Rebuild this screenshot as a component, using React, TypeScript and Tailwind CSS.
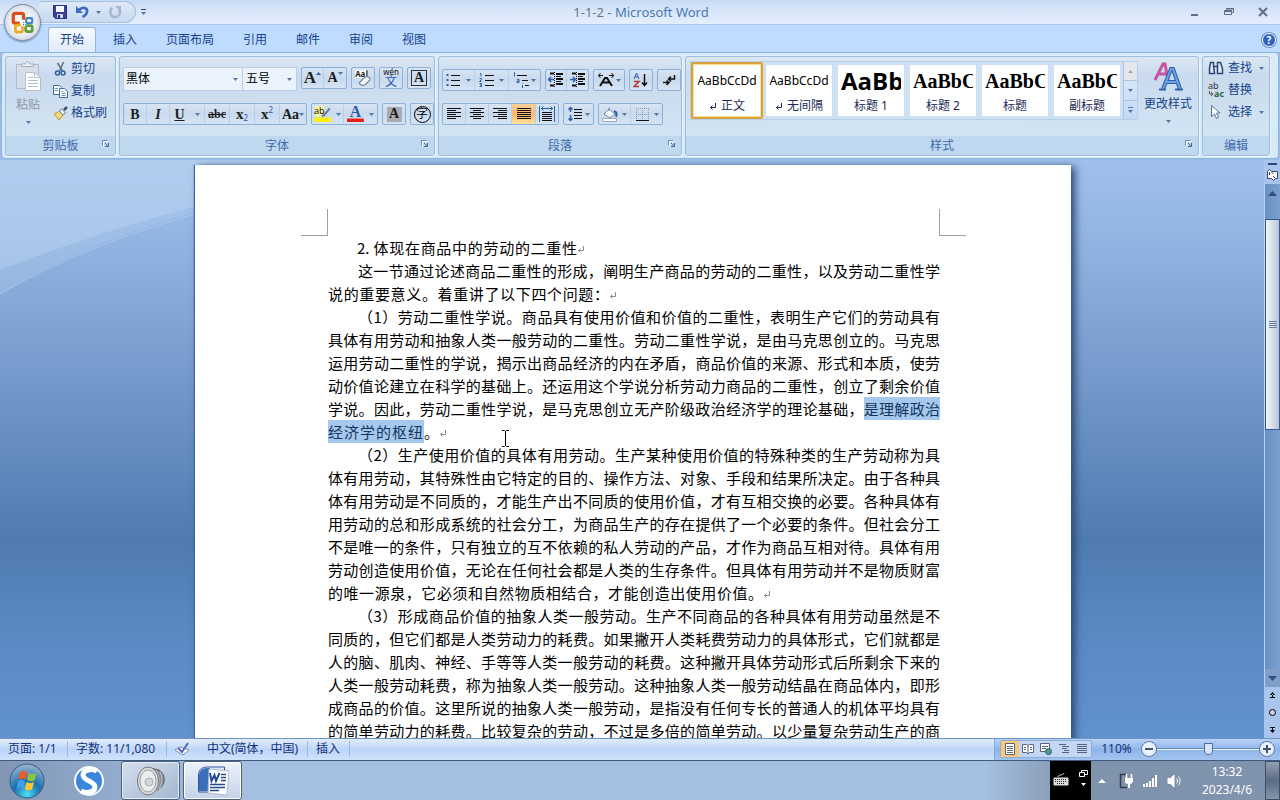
import type { ReactNode } from "react";
import clsx from "clsx";

type lineType = {
  text: string;
  selected?: string;
  tail?: string;
  end?: boolean;
  className?: string;
};

const tabs = ["开始", "插入", "页面布局", "引用", "邮件", "审阅", "视图"];

const paragraphs: lineType[][] = [
  [{ text: "2. 体现在商品中的劳动的二重性", end: true, className: "ml-[29px] w-[220px]" }],
  [
    { text: "这一节通过论述商品二重性的形成，阐明生产商品的劳动的二重性，以及劳动二重性学", className: "ml-[30px]" },
    { text: "说的重要意义。着重讲了以下四个问题：", end: true, className: "w-[281px]" },
  ],
  [
    { text: "（1）劳动二重性学说。商品具有使用价值和价值的二重性，表明生产它们的劳动具有", className: "ml-[30px]" },
    { text: "具体有用劳动和抽象人类一般劳动的二重性。劳动二重性学说，是由马克思创立的。马克思" },
    { text: "运用劳动二重性的学说，揭示出商品经济的内在矛盾，商品价值的来源、形式和本质，使劳" },
    { text: "动价值论建立在科学的基础上。还运用这个学说分析劳动力商品的二重性，创立了剩余价值" },
    { text: "学说。因此，劳动二重性学说，是马克思创立无产阶级政治经济学的理论基础，", selected: "是理解政治" },
    { text: "", selected: "经济学的枢纽", tail: "。", end: true, className: "w-[111px]" },
  ],
  [
    { text: "（2）生产使用价值的具体有用劳动。生产某种使用价值的特殊种类的生产劳动称为具", className: "ml-[30px]" },
    { text: "体有用劳动，其特殊性由它特定的目的、操作方法、对象、手段和结果所决定。由于各种具" },
    { text: "体有用劳动是不同质的，才能生产出不同质的使用价值，才有互相交换的必要。各种具体有" },
    { text: "用劳动的总和形成系统的社会分工，为商品生产的存在提供了一个必要的条件。但社会分工" },
    { text: "不是唯一的条件，只有独立的互不依赖的私人劳动的产品，才作为商品互相对待。具体有用" },
    { text: "劳动创造使用价值，无论在任何社会都是人类的生存条件。但具体有用劳动并不是物质财富" },
    { text: "的唯一源泉，它必须和自然物质相结合，才能创造出使用价值。", end: true, className: "w-[435px]" },
  ],
  [
    { text: "（3）形成商品价值的抽象人类一般劳动。生产不同商品的各种具体有用劳动虽然是不", className: "ml-[30px]" },
    { text: "同质的，但它们都是人类劳动力的耗费。如果撇开人类耗费劳动力的具体形式，它们就都是" },
    { text: "人的脑、肌肉、神经、手等等人类一般劳动的耗费。这种撇开具体劳动形式后所剩余下来的" },
    { text: "人类一般劳动耗费，称为抽象人类一般劳动。这种抽象人类一般劳动结晶在商品体内，即形" },
    { text: "成商品的价值。这里所说的抽象人类一般劳动，是指没有任何专长的普通人的机体平均具有" },
    { text: "的简单劳动力的耗费。比较复杂的劳动，不过是多倍的简单劳动。以少量复杂劳动生产的商" },
  ],
];

const styleItems = [
  { name: "正文", mark: true, preview: "text-[12px]" },
  { name: "无间隔", mark: true, preview: "text-[12px]" },
  { name: "标题 1", preview: "text-[24px] font-bold font-['Open_Sans','Noto_Sans',sans-serif]" },
  { name: "标题 2", preview: "text-[20px] font-bold font-['Liberation_Serif',serif]" },
  { name: "标题", preview: "text-[20px] font-bold font-['Liberation_Serif',serif]" },
  { name: "副标题", preview: "text-[20px] font-bold font-['Liberation_Serif',serif]" },
];

const Arrow = ({ className }: { className?: string }) => (
  <svg viewBox="0 0 5 3" className={clsx("h-[3px] w-[5px] shrink-0 fill-[#5577a8]", className)}>
    <path d="M0 0h5L2.500 3z" />
  </svg>
);

const ReturnMark = ({ className }: { className?: string }) => (
  <svg viewBox="0 0 8 9" className={clsx("h-[9px] w-2 shrink-0", className)} fill="none" stroke="currentColor">
    <path d="M6.500 1v4.500H1.500M3.500 3.500l-2 2 2 2" />
  </svg>
);

const Launcher = ({ label }: { label: string }) => (
  <button aria-label={label} className="absolute right-[5px] top-[3px]">
    <svg viewBox="0 0 9 9" className="size-[9px]" fill="none" stroke="#6a8cb8">
      <path d="M1.500 6.500v-5h5" />
      <path d="M2.500 7.500v-5h5" stroke="#fff" />
      <path d="M4 4l3 3M7.500 4v3.500H4" stroke="#46699b" />
    </svg>
  </button>
);

const Group = ({ title, className, launcher, children }: { title: string; className: string; launcher?: boolean; children: ReactNode }) => (
  <section
    aria-label={title}
    className={clsx(
      "flex h-[100px] flex-col overflow-hidden rounded-[3px] border border-[#9ebcdc] bg-linear-to-b from-[#dbe7f4] via-[#c9daed] via-20% to-[#d6e7f5] shadow-[1px_1px_0_#eaf4fd]",
      className
    )}
  >
    <div className="min-h-0 flex-1">{children}</div>
    <div className="relative h-[19px] bg-[#c0d8ef] text-center leading-[19px] text-[#3e6aaa]">
      {title}
      {launcher && <Launcher label={title + "设置"} />}
    </div>
  </section>
);

const ButtonSet = ({ children }: { children: ReactNode }) => (
  <div className="flex h-[22px] shrink-0 divide-x divide-[#b9cee7] rounded-[2px] border border-[#8fb0d8] bg-linear-to-b from-[#d7e4f3] via-[#c9daee] to-[#d5e4f5]">
    {children}
  </div>
);

const Tool = ({ label, w = "w-[22px]", arrow, active, children }: { label: string; w?: string; arrow?: boolean; active?: boolean; children: ReactNode }) => (
  <button
    aria-label={label}
    className={clsx(
      "flex items-center justify-center gap-1",
      w,
      active && "bg-linear-to-b from-[#fbd09c] via-[#fbb568] to-[#fde29b]"
    )}
  >
    {children}
    {arrow && <Arrow />}
  </button>
);

const Icon = ({ children, className }: { children: ReactNode; className?: string }) => (
  <svg viewBox="0 0 16 16" className={clsx("size-4 shrink-0", className)} fill="none" stroke="#111">
    {children}
  </svg>
);

const serif = "font-['Liberation_Serif',serif] text-[#1c1c1c]";

const TitleBar = () => (
  <header className="relative flex h-6 shrink-0 items-center justify-between bg-linear-to-b from-[#c6dbf5] via-[#d9e6f8] via-50% to-[#e3effd]">
    <div className="ml-10 flex h-[22px] items-center rounded-r-full border border-l-0 border-[#a6c0e0] bg-linear-to-b from-[#dde9f8] to-[#c8daf0] pl-3 pr-3">
      <button aria-label="保存">
        <Icon>
          <path d="M1.500 1.500h13v13H3.500l-2-2z" fill="#3a3f9c" stroke="#2b3185" />
          <path d="M4 2h8v6H4z" fill="#f3f6fd" stroke="none" />
          <path d="M5 10h6v4H5z" fill="#cdd4ea" stroke="none" />
          <path d="M6 11h2v3H6z" fill="#23286b" stroke="none" />
        </Icon>
      </button>
      <button aria-label="撤消" className="ml-1.5 flex items-center gap-1.5">
        <Icon>
          <path d="M5 6c4-4 9-2 8 2-.500 2.500-2.500 4-4.500 5" stroke="#3f68c0" strokeWidth="2.500" />
          <path d="M2 2v7h7z" fill="#3f68c0" stroke="none" />
        </Icon>
        <Arrow />
      </button>
      <button aria-label="重复" className="ml-1.5">
        <Icon>
          <path d="M5 3.500C1.500 8 4 13 8 13s6.500-4 4-8" stroke="#a9b8cf" strokeWidth="2.500" />
          <path d="M8 2h6v6z" fill="#a9b8cf" stroke="none" />
        </Icon>
      </button>
    </div>
    <button aria-label="自定义快速访问工具栏" className="ml-1 flex w-[6px] flex-col items-center gap-0.5">
      <i className="h-px w-[5px] bg-[#2b4f85]" />
      <Arrow className="fill-[#2b4f85]" />
    </button>
    <h1 className="flex-1 pr-[54px] text-center text-[13px] leading-6 text-[#4a79b5]">
      <span className="text-[#6c7580]">1-1-2</span> - Microsoft Word
    </h1>
    <div className="flex gap-6 pr-3">
      <button aria-label="最小化">
        <svg viewBox="0 0 10 10" className="size-2.5" fill="none" stroke="#5d6f88" strokeWidth="2">
          <path d="M1 8h7" />
        </svg>
      </button>
      <button aria-label="还原">
        <svg viewBox="0 0 10 10" className="size-2.5" fill="none" stroke="#5d6f88">
          <path d="M.500 3.500h7v4h-7zM.500 4.500h7M2.500 3V1.500h7v4H8M2.500 2h7" />
        </svg>
      </button>
      <button aria-label="关闭">
        <svg viewBox="0 0 10 10" className="size-2.5" fill="none" stroke="#5d6f88" strokeWidth="2">
          <path d="M1 1l8 8M9 1L1 9" />
        </svg>
      </button>
    </div>
    <button aria-label="Office 按钮" className="absolute left-1 top-1 z-10 flex size-[37px] items-center justify-center rounded-full border border-[#7f8ea5] bg-radial from-white via-[#eceff6] to-[#b3bfd2] shadow-[0_1px_2px_#6d82a3]">
      <svg viewBox="0 0 24 24" className="size-[26px]" fill="none" strokeWidth="3">
        <path d="M9 12H4.500a1.500 1.500 0 0 1-1.500-1.500V5a2 2 0 0 1 2-2h6a1.500 1.500 0 0 1 1.500 1.500V9" stroke="#d9501e" />
        <path d="M15 11V8.500a1 1 0 0 1 1-1h3.500a1 1 0 0 1 1 1V11a1 1 0 0 1-1 1H15" stroke="#3f86c9" strokeWidth="2" />
        <path d="M10 14H6.500A1.500 1.500 0 0 0 5 15.500V19a1.500 1.500 0 0 0 1.500 1.500H10a1.500 1.500 0 0 0 1.500-1.500v-4" stroke="#efa91d" strokeWidth="2.500" />
        <path d="M14.500 15v3.500a1.500 1.500 0 0 0 1.500 1.500h3a1.500 1.500 0 0 0 1.500-1.500V16a1.500 1.500 0 0 0-1.500-1.500h-4" stroke="#5d9a3a" strokeWidth="2.500" />
        <path d="M12 11.500h1M14 11.500h1M12 13.500h1M14 13.500h1" stroke="#2f6fb5" strokeWidth="1" />
      </svg>
    </button>
  </header>
);

const TabRow = () => (
  <nav className="flex h-7 shrink-0 items-end border-t border-[#a9c8ee] bg-[#bfdbff] pl-[48px] pr-1">
    {tabs.map((tab, i) => (
      <button
        key={tab}
        className={clsx(
          "text-[#15428b]",
          i === 0
            ? "mr-[17px] h-[25px] w-12 rounded-t-[3px] border border-b-0 border-[#93b5e0] bg-linear-to-b from-[#f6fbff] to-[#dfebf8]"
            : "mr-[29px] h-[25px]"
        )}
      >
        {tab}
      </button>
    ))}
    <button aria-label="帮助" className="mb-[5px] ml-auto flex size-3.5 items-center justify-center rounded-full border border-white bg-[#2f62c4] text-[10px] font-bold leading-none text-white shadow-[0_0_0_1px_#6c8fc8]">
      ?
    </button>
  </nav>
);

const ClipboardGroup = () => (
  <Group title="剪贴板" className="w-[111px]" launcher>
    <div className="flex pl-1.5 pt-px">
      <button className="flex w-8 flex-col items-center text-[#8d97a5]">
        <svg viewBox="0 0 28 32" className="mt-0.5 h-8 w-7" fill="#d5dee9" stroke="#b1bdcd">
          <path d="M2.500 4.500h22v24h-22z" />
          <path d="M7.500 6.500V4h4c0-3 4-3 4 0h4v2.500z" fill="#eef2f7" stroke="#a2afc1" />
          <path d="M11.500 12.500h9l6 5v13h-15z" fill="#fff" />
          <path d="M20.500 12.500v5h6M14 17.500h5M14 20.500h10M14 23.500h10M14 26.500h10" fill="none" />
        </svg>
        <span className="mt-1 leading-[17px]">粘贴</span>
        <Arrow className="mt-2 fill-[#9aa5b5]" />
      </button>
      <div className="ml-[9px] flex flex-col text-[#15428b]">
        <button className="flex h-[22px] items-center gap-0.5">
          <Icon>
            <path d="M4.500 2l5 8M10.500 1l-4 9" stroke="#5f6f88" strokeWidth="1.500" />
            <circle cx="4.500" cy="12" r="2" stroke="#2e5f9e" strokeWidth="1.500" />
            <circle cx="10" cy="12" r="2" stroke="#2e5f9e" strokeWidth="1.500" />
          </Icon>
          剪切
        </button>
        <button className="flex h-[22px] items-center gap-0.5">
          <Icon>
            <path d="M.500 2.500h6l2 2v7h-8z" fill="#fff" stroke="#47699f" />
            <path d="M6.500 5.500h5l3 3v6h-8z" fill="#fff" stroke="#47699f" />
            <path d="M2 5.500h3M2 7.500h3M8.500 8.500h2M8.500 10.500h4M8.500 12.500h4" stroke="#6d8fc4" />
          </Icon>
          复制
        </button>
        <button className="flex h-[22px] items-center gap-0.5">
          <Icon>
            <path d="M1 9l6-3 3 4-4 5z" fill="#f4d873" stroke="#c49b35" />
            <path d="M6.500 6l2-2.500 4 4.500-3 2z" fill="#edf1f8" stroke="#68799a" />
            <path d="M11 5l3-3" stroke="#3f4f6b" strokeWidth="2.500" />
          </Icon>
          格式刷
        </button>
      </div>
    </div>
  </Group>
);

const FontGroup = () => (
  <Group title="字体" className="w-[316px]" launcher>
    <div className="flex flex-col gap-3 px-[3px] pt-[10px]">
      <div className="flex h-6 gap-1">
        <div className="flex flex-1">
          <div className="relative flex-1">
            <select aria-label="字体" className="h-6 w-full appearance-none border border-[#b9cfe9] bg-[#eaf2fb] pl-0.5 text-black">
              <option>黑体</option>
            </select>
            <Arrow className="pointer-events-none absolute right-[5px] top-[11px]" />
          </div>
          <div className="relative w-[54px]">
            <select aria-label="字号" className="h-6 w-full appearance-none border border-l-0 border-[#b9cfe9] bg-[#eaf2fb] pl-[3px] text-black">
              <option>五号</option>
            </select>
            <Arrow className="pointer-events-none absolute right-[5px] top-[11px]" />
          </div>
        </div>
        <ButtonSet>
          <Tool label="增大字体">
            <span className={clsx(serif, "text-[17px] font-bold leading-5")}>A</span>
            <svg viewBox="0 0 5 3" className="-ml-1 mb-2.5 h-[3px] w-[5px] fill-[#2f5fa8]"><path d="M0 3h5L2.500 0z" /></svg>
          </Tool>
          <Tool label="缩小字体">
            <span className={clsx(serif, "text-[14px] font-bold leading-5")}>A</span>
            <Arrow className="-ml-1 mb-2.5 fill-[#2f5fa8]" />
          </Tool>
        </ButtonSet>
        <ButtonSet>
          <Tool label="清除格式">
            <Icon className="size-[18px]">
              <path d="M1 1h11v7H1z" fill="#fff" stroke="none" />
              <text x="1" y="7" fontSize="7" fontWeight="bold" fill="#222" stroke="none">Aa</text>
              <path d="M11.500 1v6" />
              <path d="M5 12l5-5c2-1 5 1 4 3l-4 4c-2 1-6 0-5-2z" fill="#f3f5fa" stroke="#70809c" />
            </Icon>
          </Tool>
        </ButtonSet>
        <ButtonSet>
          <Tool label="拼音指南">
            <span className="flex flex-col items-center">
              <span className="text-[8px] leading-[8px] text-[#111]">wén</span>
              <span className="text-[12px] leading-[12px] text-[#2459b5]">文</span>
            </span>
          </Tool>
        </ButtonSet>
        <ButtonSet>
          <Tool label="字符边框">
            <span className={clsx(serif, "flex size-4 items-center justify-center border border-[#333] text-[14px] font-bold leading-none")}>A</span>
          </Tool>
        </ButtonSet>
      </div>
      <div className="flex gap-1">
        <div className="flex flex-1">
          <ButtonSet>
            <Tool label="加粗" w="w-[23px]"><b className={clsx(serif, "text-[14px]")}>B</b></Tool>
            <Tool label="倾斜" w="w-[23px]"><b className={clsx(serif, "text-[14px] italic")}>I</b></Tool>
            <Tool label="下划线" w="w-[35px]" arrow><b className={clsx(serif, "mr-1.5 text-[14px] underline")}>U</b></Tool>
            <Tool label="删除线" w="w-[25px]"><b className={clsx(serif, "text-[12px] line-through")}>abc</b></Tool>
            <Tool label="下标" w="w-[25px]">
              <b className={clsx(serif, "text-[15px]")}>x</b>
              <span className="-ml-1 mt-2 text-[8px] text-[#2459b5]">2</span>
            </Tool>
            <Tool label="上标" w="w-[25px]">
              <b className={clsx(serif, "text-[15px]")}>x</b>
              <span className="-ml-1 mb-2 text-[8px] text-[#2459b5]">2</span>
            </Tool>
            <Tool label="更改大小写" w="w-[26px]" arrow><b className={clsx(serif, "-mr-1 text-[14px]")}>Aa</b></Tool>
          </ButtonSet>
        </div>
        <ButtonSet>
          <Tool label="突出显示" w="w-[32px]" arrow>
            <Icon className="size-[18px]">
              <path d="M1 1h8v9H1z" fill="#fdf6a0" stroke="none" />
              <text x="0" y="8" fontSize="8" fill="#111" stroke="none">ab</text>
              <path d="M14 3l-5 6-2 1" stroke="#6e7f9d" strokeWidth="2" />
              <path d="M0 11h15v4H0z" fill="#ffee00" stroke="none" />
            </Icon>
          </Tool>
          <Tool label="字体颜色" w="w-[33px]" arrow>
            <Icon className="size-[18px]">
              <text x="2.500" y="11" fontSize="14" fontWeight="bold" fontFamily="Liberation Serif" fill="#2b5ba5" stroke="none">A</text>
              <path d="M0 12h15v3H0z" fill="#e8201a" stroke="none" />
            </Icon>
          </Tool>
        </ButtonSet>
        <ButtonSet>
          <Tool label="字符底纹">
            <span className={clsx(serif, "flex size-[15px] items-center justify-center bg-[#a9acb0] text-[14px] font-bold leading-none")}>A</span>
          </Tool>
        </ButtonSet>
        <ButtonSet>
          <Tool label="带圈字符">
            <span className="flex size-[17px] items-center justify-center rounded-full border border-black text-[12px] leading-none text-black">字</span>
          </Tool>
        </ButtonSet>
      </div>
    </div>
  </Group>
);

const ParagraphGroup = () => (
  <Group title="段落" className="w-[244px]" launcher>
    <div className="flex flex-col gap-3 px-[3px] pt-3">
      <div className="flex gap-1">
        <ButtonSet>
          <Tool label="项目符号" w="w-[32px]" arrow>
            <Icon>
              <path d="M5 3.500h9M5 8.500h9M5 13.500h9" />
              <path d="M.500 3h2M.500 8h2M.500 13h2" stroke="#2f5fa8" strokeWidth="2" />
            </Icon>
          </Tool>
          <Tool label="编号" w="w-[34px]" arrow>
            <Icon>
              <path d="M6 3.500h9M6 8.500h9M6 13.500h9" />
              <path d="M1 1.500h1v3M.500 6.500h2v1l-2 2h2M.500 11.500h2v3h-2M1 13h1" stroke="#2f5fa8" />
            </Icon>
          </Tool>
          <Tool label="多级列表" w="w-[31px]" arrow>
            <Icon className="-mr-0.5">
              <path d="M4 3.500h10M9 8.500h6M12 13.500h4" />
              <path d="M1 .500h.500v4M4 7.500h2v3H4v-1.500h2M9.500 11.500v.500M9.500 13v3" stroke="#2f5fa8" />
            </Icon>
          </Tool>
        </ButtonSet>
        <ButtonSet>
          <Tool label="减少缩进量" w="w-[21px]">
            <Icon>
              <path d="M2 1.500h4M8 2h7M8 7h7M2 13.500h4M8 12h7" strokeWidth="2" />
              <path d="M8 4.500h5M8 9.500h5" />
              <path d="M6.500 0v16" strokeDasharray="1 1" />
              <path d="M0 7.500h6M3 5l-2.500 2.500L3 10" stroke="#2f5fa8" strokeWidth="1.500" />
            </Icon>
          </Tool>
          <Tool label="增加缩进量" w="w-[21px]">
            <Icon>
              <path d="M2 1.500h4M8 2h7M8 7h7M2 13.500h4M8 12h7" strokeWidth="2" />
              <path d="M8 4.500h5M8 9.500h5" />
              <path d="M6.500 0v16" strokeDasharray="1 1" />
              <path d="M0 7.500h6M3 5l2.500 2.500L3 10" stroke="#2f5fa8" strokeWidth="1.500" />
            </Icon>
          </Tool>
        </ButtonSet>
        <ButtonSet>
          <Tool label="中文版式" w="w-[30px]" arrow>
            <Icon className="-mr-0.5">
              <path d="M2 14l5-8h2l5 8M5 10.500h6" strokeWidth="2" />
              <path d="M0 3.500h5M11 3.500h5M2.500 1L.500 3.500l2 2.500M13.500 1l2 2.500-2 2.500" />
            </Icon>
          </Tool>
        </ButtonSet>
        <ButtonSet>
          <Tool label="排序">
            <Icon>
              <path d="M1 7l2.500-6L6 7M2 5h3" stroke="#2f5fa8" />
              <path d="M1 9.500h5l-5 5h5" stroke="#b83a34" strokeWidth="1.500" />
              <path d="M11.500 2v11M9 10.500l2.500 3 2.500-3" strokeWidth="1.500" />
            </Icon>
          </Tool>
        </ButtonSet>
        <ButtonSet>
          <Tool label="显示编辑标记">
            <Icon>
              <path d="M13.500 3v4H8M10 4.500L7.500 7l2.500 2.500M8.500 10.500H2M5.500 8.500l2.500 2-2.500 2.500" strokeWidth="1.500" />
            </Icon>
          </Tool>
        </ButtonSet>
      </div>
      <div className="flex gap-1">
        <ButtonSet>
          <Tool label="左对齐" w="w-[23px]"><Icon><path d="M1 2.500h14M1 4.500h9M1 6.500h14M1 8.500h9M1 10.500h14M1 12.500h9" /></Icon></Tool>
          <Tool label="居中" w="w-[23px]"><Icon><path d="M1 2.500h14M4 4.500h8M1 6.500h14M4 8.500h8M1 10.500h14M4 12.500h8" /></Icon></Tool>
          <Tool label="右对齐" w="w-[23px]"><Icon><path d="M1 2.500h14M6 4.500h9M1 6.500h14M6 8.500h9M1 10.500h14M6 12.500h9" /></Icon></Tool>
          <Tool label="两端对齐" w="w-[24px]" active><Icon><path d="M1 2.500h14M1 4.500h14M1 6.500h14M1 8.500h14M1 10.500h14M1 12.500h14" /></Icon></Tool>
          <Tool label="分散对齐" w="w-[22px]">
            <Icon>
              <path d="M3 6.500h10M3 8.500h10M3 10.500h10M3 12.500h10M3 14.500h10" />
              <path d="M.500 0v16M15.500 0v16M2 2.500h12M4.500.500l-2 2 2 2M11.500.500l2 2-2 2" stroke="#2f5fa8" />
            </Icon>
          </Tool>
        </ButtonSet>
        <ButtonSet>
          <Tool label="行距" w="w-[29px]" arrow>
            <Icon className="-mr-0.5">
              <path d="M7 3.500h8M7 6.500h8M7 9.500h8M7 12.500h8" />
              <path d="M3.500 1v5M3.500 9v6M1.500 3.500l2-2 2 2M1.500 12.500l2 2 2-2" stroke="#2f5fa8" strokeWidth="1.500" />
            </Icon>
          </Tool>
        </ButtonSet>
        <ButtonSet>
          <Tool label="底纹" w="w-[32px]" arrow>
            <Icon>
              <path d="M2 8l5-5 6 5-5 4z" fill="#f5f7fb" stroke="#7284a2" />
              <path d="M7 5V1.500" stroke="#7284a2" />
              <path d="M12 5c3 1 3 3 2 6" stroke="#2f5fa8" strokeWidth="2" />
              <path d="M.500 12.500h14v3H.500z" fill="#fff" stroke="#9aa9c0" />
            </Icon>
          </Tool>
          <Tool label="边框" w="w-[31px]" arrow>
            <Icon>
              <path d="M2 2.500h12M2 8.500h12M2.500 2v12M8.500 2v12M14.500 2v12" stroke="#8495b0" strokeDasharray="1 1" />
              <path d="M2 14.500h13" />
            </Icon>
          </Tool>
        </ButtonSet>
      </div>
    </div>
  </Group>
);

const StylesGroup = () => (
  <Group title="样式" className="min-w-0 flex-1" launcher>
    <div className="flex pl-1 pt-1">
      <div className="flex h-[59px] border border-[#b6cfeb] bg-[#cfe0f3]">
        {styleItems.map((item, i) => (
          <button
            key={item.name}
            className={clsx(
              "h-[57px] w-[72px]",
              i === 0 ? "rounded-[2px] border-2 border-[#d9a13b] bg-[#fbe08e] p-px" : "p-[3px]"
            )}
          >
            <span className="flex h-full flex-col justify-between overflow-hidden bg-white pb-0.5">
              <span className={clsx("mx-[3px] flex h-[31px] items-center overflow-hidden whitespace-nowrap leading-[28px] text-black", i < 2 && "justify-center", item.preview)}>
                {i < 2 ? "AaBbCcDd" : i === 2 ? "AaBb" : "AaBbC"}
              </span>
              <span className="flex items-center justify-center gap-1 whitespace-nowrap leading-4 text-[#1a2a55]">
                {item.mark && <ReturnMark />}
                {item.name}
              </span>
            </span>
          </button>
        ))}
        <div className="flex w-[14px] flex-col divide-y divide-[#a9c3e4] border-l border-[#a9c3e4] bg-linear-to-b from-[#e2ecf8] to-[#c3d9f3]">
          <button aria-label="向上" className="flex flex-1 items-center justify-center bg-[#e4e7ec]"><Arrow className="rotate-180 fill-[#a2a8b2]" /></button>
          <button aria-label="向下" className="flex flex-1 items-center justify-center"><Arrow /></button>
          <button aria-label="其他" className="flex flex-1 flex-col items-center justify-center gap-0.5"><i className="h-px w-[5px] bg-[#5577a8]" /><Arrow /></button>
        </div>
      </div>
      <button className="flex flex-1 flex-col items-center text-[#15428b]">
        <svg viewBox="0 0 32 32" className="h-8 w-8" fill="none">
          <path d="M3 19L11 3h2l3 16M7 13h8" stroke="#c8549f" strokeWidth="3" />
          <path d="M11 28L19 8h2l7 20M14.500 21h10" stroke="#2f61ab" strokeWidth="4" />
          <path d="M11 28L19 8h2l7 20M14.500 21h10" stroke="#6ea3e3" strokeWidth="2" />
          <path d="M7 28.500h7M23 28.500h8" stroke="#2f61ab" strokeWidth="2" />
        </svg>
        <span className="mt-0.5 leading-[17px]">更改样式</span>
        <Arrow className="mt-2" />
      </button>
    </div>
  </Group>
);

const EditGroup = () => (
  <Group title="编辑" className="w-[68px]">
    <div className="flex flex-col pl-[5px] text-[#15428b]">
      <button className="flex h-[22px] items-center gap-1">
        <Icon>
          <path d="M2.500 2.500h3v3l1 8h-5v-5zM9.500 2.500h3l2 6v5h-5zM6 6.500h3" fill="#dfe8f5" stroke="#2c4675" strokeWidth="1.500" />
        </Icon>
        查找<Arrow className="ml-[3px]" />
      </button>
      <button className="flex h-[22px] items-center gap-1">
        <Icon className="overflow-visible">
          <text x="0" y="7" fontSize="9" fill="#333" stroke="none">ab</text>
          <text x="6" y="15" fontSize="9" fontWeight="bold" fill="#2c6a3c" stroke="none">ac</text>
          <path d="M1.500 9v3h3M3 10l2 2-2 2" stroke="#555" />
        </Icon>
        替换
      </button>
      <button className="flex h-[22px] items-center gap-1">
        <Icon>
          <path d="M3.500 1.500v11l3-2.500 2 4.500 2-1-2-4.500h3.500z" fill="#fff" stroke="#60708e" />
        </Icon>
        选择<Arrow className="ml-[3px]" />
      </button>
    </div>
  </Group>
);

const DocLine = ({ line }: { line: lineType }) => (
  <span className="flex h-[23px] items-center">
    <span className={clsx("block whitespace-nowrap [text-align-last:justify]", !line.end && "flex-1", line.className)}>
      {line.text}
      {line.selected && <mark className="bg-[#a5c8ec] py-px text-[#12365f]">{line.selected}</mark>}
      {line.tail}
    </span>
    {line.end && <ReturnMark className="mt-1 text-[#8a8a8a]" />}
  </span>
);

const Paper = () => (
  <article className="relative mt-[5px] w-[876px] max-w-full bg-white shadow-[4px_2px_8px_#2c4a73,-1px_0_1px_#46699a]">
    <div className="flex justify-between pl-[106px] pr-[105px] pt-11">
      <i className="size-[27px] border-b border-r border-[#a0a0a0]" />
      <i className="size-[27px] border-b border-l border-[#a0a0a0]" />
    </div>
    <div className="pl-[133px] pr-[131px] font-['Noto_Sans_CJK_SC',sans-serif] text-[15px] leading-[23px] text-black">
      {paragraphs.map((lines, i) => (
        <p key={i}>
          {lines.map((line, j) => (
            <DocLine key={j} line={line} />
          ))}
        </p>
      ))}
    </div>
    <svg viewBox="0 0 9 17" className="absolute left-[306px] top-[265px] h-[17px] w-[9px]" fill="none" stroke="#000">
      <path d="M1 .500h2.500l1 1 1-1H8M4.500 1v15M1 16.500h2.500l1-1 1 1H8" />
    </svg>
  </article>
);

// light sweep in the top left corner of the desk
const Sweep = () => (
  <svg viewBox="0 0 320 140" className="absolute left-0 top-0 h-[140px] w-80" fill="#c3dbf5">
    <path d="M0 0h320v25C200 45 90 80 0 134z" opacity=".25" />
    <path d="M0 0h320v20C200 40 90 75 0 110z" opacity=".35" />
    <path d="M0 134C90 82 200 47 320 25" fill="none" stroke="#b8d2f0" opacity=".6" />
  </svg>
);

const ScrollBar = () => (
  <aside className="flex w-4 shrink-0 flex-col bg-[#a9c5ee]">
    <button aria-label="拆分" className="mx-auto mt-[3px] h-0.5 w-[9px] bg-[#27497f]" />
    <button aria-label="标尺" className="mx-auto mb-0.5 mt-[3px] flex h-[14px]">
      <svg viewBox="0 0 13 13" className="size-[13px]" fill="#fff" stroke="#33456b">
        <path d="M1.500 3.500l2-2 2 2h6v7h-2l-2 2-2-2h-4zM5.500 4l2 2M7 8l2 2M3.500 4v3" />
      </svg>
    </button>
    <div className="flex min-h-0 flex-1 flex-col border-l border-[#b9d2f3] bg-linear-to-r from-[#688fc4] to-[#7ba0d0]">
      <button aria-label="向上滚动" className="flex h-[18px] shrink-0 items-center justify-center">
        <svg viewBox="0 0 9 5" className="h-[5px] w-[9px] fill-[#2d4f82]"><path d="M0 5h9L4.500 0z" /></svg>
      </button>
      <div className="mt-[17px] flex h-[42%] flex-col items-center justify-center gap-px border border-[#39598c] bg-linear-to-r from-[#f0f4f9] via-[#d5dfeb] to-[#b5c5d9]">
        {[0, 1, 2, 3].map((n) => (
          <i key={n} className="h-px w-2 bg-[#6b7f9e]" />
        ))}
      </div>
      <button aria-label="向下滚动" className="mt-auto flex h-[18px] shrink-0 items-center justify-center bg-[#7d9fca]">
        <svg viewBox="0 0 9 5" className="h-[5px] w-[9px] fill-[#2d4f82]"><path d="M0 0h9L4.500 5z" /></svg>
      </button>
    </div>
    <div className="flex h-[51px] shrink-0 flex-col items-center justify-around">
      <button aria-label="前一页">
        <svg viewBox="0 0 7 7" className="size-[7px]"><path d="M1 3h5L3.500 0zM3 2h1v3H3zM1 5h5v1H1z" /></svg>
      </button>
      <button aria-label="选择浏览对象" className="size-[7px] rounded-full border border-black bg-[#c9d3e2]" />
      <button aria-label="下一页">
        <svg viewBox="0 0 7 7" className="size-[7px]"><path d="M1 4h5L3.500 7zM3 2h1v3H3zM1 1h5v1H1z" /></svg>
      </button>
    </div>
  </aside>
);

const statusItem = "flex h-4 items-center border-r border-[#9dbbe2] whitespace-nowrap";

const StatusBar = () => (
  <footer className="flex h-[22px] shrink-0 items-center justify-between border-t border-[#6f93c4] bg-linear-to-b from-[#e2edfc] via-[#bcd5f8] to-[#cfe2fb] text-[#15307a]">
    <div className="flex pb-0.5">
      <span className={clsx(statusItem, "w-[68px] pl-2")}>页面: 1/1</span>
      <span className={clsx(statusItem, "w-[99px] pl-2")}>字数: 11/1,080</span>
      <span className={clsx(statusItem, "w-[141px] gap-[17px] pl-[7px]")}>
        <Icon>
          <path d="M1 9l5-3 9 3-6 5z" fill="#fff" stroke="#7c8fb5" />
          <path d="M4 7l4 4 6-9" stroke="#5a5fb8" strokeWidth="2" />
        </Icon>
        中文(简体，中国)
      </span>
      <span className={clsx(statusItem, "w-[42px] pl-2")}>插入</span>
    </div>
    <div className="flex h-full items-center border-l border-[#88aadb] bg-linear-to-b from-[#b9d3f6] via-[#8db4e8] to-[#a4c4f0] pb-px pl-[5px] pr-[5px]">
      <div className="flex h-[18px] items-center rounded-[2px] border border-[#8eaddb] bg-[#c3d7f2]">
        {["页面视图", "阅读版式视图", "Web 版式视图", "大纲视图", "普通视图"].map((v, i) => (
          <button key={v} aria-label={v} className={clsx("flex h-4 w-[18px] items-center justify-center", i === 0 && "bg-[#fbc779]")}>
            <svg viewBox="0 0 12 12" className="size-3" fill="none" stroke="#55657f">
              {i === 0 && <path d="M1.500.500h9v11h-9zM3 3.500h6M3 5.500h6M3 7.500h6M3 9.500h6" fill="#fff" />}
              {i === 1 && <path d="M.500 1.500h4l1.500 1 1.500-1h4v8h-4L6 11 4.500 9.500h-4zM6 2v9M2 4.500h2M2 6.500h2M8 4.500h2M8 6.500h2" fill="#fff" />}
              {i === 2 && (
                <>
                  <path d="M.500.500h9v8h-9zM2 3.500h6M2 5.500h4" fill="#fff" />
                  <circle cx="8.500" cy="8.500" r="3" fill="#4d9a7c" stroke="#2d5f86" />
                </>
              )}
              {i === 3 && <path d="M1 1.500h7M4 3.500h7M4 5.500h5M6 7.500h5M4 9.500h7" />}
              {i === 4 && <path d="M1 1.500h10M1 3.500h10M1 5.500h10M1 7.500h10M1 9.500h10" />}
            </svg>
          </button>
        ))}
      </div>
      <button className="ml-2 w-[33px]">110%</button>
      <button aria-label="缩小" className="ml-2 flex size-4 items-center justify-center rounded-full border border-[#5677ab] bg-[#e9f1fc]">
        <i className="h-0.5 w-2 bg-[#43536f]" />
      </button>
      <input
        type="range"
        aria-label="显示比例"
        min={10}
        max={210}
        defaultValue={110}
        className="h-4 w-[102px] appearance-none bg-transparent [&::-webkit-slider-runnable-track]:h-px [&::-webkit-slider-runnable-track]:bg-[#eef5ff] [&::-webkit-slider-runnable-track]:shadow-[0_-1px_0_#6485b8] [&::-webkit-slider-thumb]:-mt-1.5 [&::-webkit-slider-thumb]:h-3 [&::-webkit-slider-thumb]:w-[9px] [&::-webkit-slider-thumb]:appearance-none [&::-webkit-slider-thumb]:rounded-b-[4px] [&::-webkit-slider-thumb]:border [&::-webkit-slider-thumb]:border-[#4d6c9e] [&::-webkit-slider-thumb]:bg-[#d8e5f7]"
      />
      <button aria-label="放大" className="flex size-4 items-center justify-center rounded-full border border-[#5677ab] bg-[#e9f1fc]">
        <svg viewBox="0 0 8 8" className="size-2" stroke="#43536f" strokeWidth="2"><path d="M0 4h8M4 0v8" /></svg>
      </button>
    </div>
  </footer>
);

const TaskBar = () => (
  <div className="flex h-10 shrink-0 items-center justify-between border-t border-[#40597f] bg-[linear-gradient(to_right,#8296b4,#8da4c5_6%,#a4bfdf_18%,#a4bfdf_77%,#8093ac_84%,#8093ac)]">
    <div className="flex items-center">
      <button aria-label="开始菜单" className="ml-[9px]">
        <svg viewBox="0 0 36 36" className="size-9">
          <defs>
            <radialGradient id="orb" cx=".5" cy=".9" r=".9">
              <stop offset="0" stopColor="#4fe0f5" />
              <stop offset=".45" stopColor="#1b6fae" />
              <stop offset="1" stopColor="#9db7d0" />
            </radialGradient>
          </defs>
          <circle cx="18" cy="18" r="17" fill="url(#orb)" stroke="#33587f" />
          <path d="M11 9c3-1.500 5-1 7 .500L16.500 17c-2-1.500-4-2-7-.500z" fill="#ee5a24" />
          <path d="M19.500 10c3 1.500 5 1.500 8 0l-2 7.500c-3 1-5 1-7.500-.500z" fill="#8cc63f" />
          <path d="M9 18c3-1.500 5-1 7 .500L14.500 26c-2-1.500-4-2-7-.500z" fill="#3fa0e8" />
          <path d="M17.500 19c3 1.500 5 1.500 7.500 0l-2 7.500c-3 1-5 1-7-.500z" fill="#fdc82f" />
        </svg>
      </button>
      <button aria-label="搜狗浏览器" className="ml-[29px]">
        <svg viewBox="0 0 30 30" className="size-[30px]" fill="none">
          <circle cx="15" cy="15" r="15" fill="#f7faff" />
          <circle cx="15" cy="15" r="13" fill="#3b86dc" />
          <path d="M23 5C17 2 9 4 9 9c0 6 12 6 12 12 0 5-8 7-14 4" stroke="#fff" strokeWidth="5" />
        </svg>
      </button>
      <button aria-label="音量合成器" className="ml-[17px] flex h-[39px] w-[59px] items-center justify-center rounded-[3px] border border-[#4b6180] bg-linear-to-br from-[#d5dfec] to-[#a3b7d0] shadow-[inset_0_0_0_1px_#e3ecf6]">
        <svg viewBox="0 0 32 32" className="size-8">
          <path d="M15 3l9 2c7 5 7 14 0 19l-9 5z" fill="#868b93" stroke="#5b6068" />
          <path d="M21 5c4 6 4 15 0 21M25 7c3 5 2 13-1 17" fill="none" stroke="#c9cdd2" />
          <ellipse cx="13" cy="16" rx="10.500" ry="14" fill="#d8dadd" stroke="#777" />
          <ellipse cx="13" cy="16" rx="8" ry="11" fill="#ebecee" stroke="#9a9da2" />
          <circle cx="14" cy="17" r="4" fill="#d3d6da" stroke="#aaa" />
        </svg>
      </button>
      <button aria-label="Word" className="ml-[3px] flex h-[39px] w-[59px] items-center justify-center rounded-[3px] border border-[#4b6180] bg-linear-to-b from-[#edf2f9] to-[#c3d3e8] shadow-[inset_0_0_0_1px_#fff]">
        <svg viewBox="0 0 32 32" className="size-8">
          <path d="M1.500 27V11c0-6 3-9 9-9h17v25z" fill="#dbe8f8" stroke="#2e579c" />
          <path d="M2 26V11c0-5 3-8 8-8h3v23z" fill="#3a6fb8" />
          <path d="M12 4l20 2-2 24-19-2z" fill="#fff" stroke="#a9b9d0" />
          <path d="M13 8l1.500 8 3-6 1.500 6 3.500-8" fill="none" stroke="#234a90" strokeWidth="2" />
          <path d="M24 9.500h5M24 12.500h5M24 15.500h5M13 19.500h15M13 22.500h15M13 25.500h9" stroke="#234a90" strokeWidth="1.500" />
        </svg>
      </button>
    </div>
    <div className="flex h-full items-center text-white">
      <div className="flex h-full w-[41px] items-center justify-center gap-2.5 bg-black">
        <svg viewBox="0 0 16 16" className="-mt-1 size-4" fill="none" stroke="#ddd">
          <path d="M1 7h14v7H1z" fill="#ddd" />
          <path d="M2 8.500h12M2 10.500h12M4 12.500h8" stroke="#222" strokeDasharray="1 1" />
          <path d="M5 6c0-3 5-1 6-4" />
        </svg>
        <svg viewBox="0 0 9 18" className="-mt-1.5 h-[18px] w-[9px]" fill="none" stroke="#fff">
          <path d="M.500 3.500h5v4h-5zM2.500 3V1.500h6v4H6" />
          <path d="M2 14h5L4.500 17z" fill="#fff" stroke="none" />
        </svg>
      </div>
      <svg viewBox="0 0 8 4" className="ml-[7px] h-1 w-2 fill-white"><path d="M0 4h8L4 0z" /></svg>
      <svg viewBox="0 0 16 16" className="ml-3 size-4" fill="none" stroke="#fff">
        <path d="M8 1.500H2.500v13H9" strokeWidth="1.500" stroke="#303a48" />
        <path d="M8.500 1v4M13.500 1v4" strokeWidth="1.500" />
        <path d="M7 5h8v3c0 2-2 3-3 3v4h-2v-4c-2 0-3-1-3-3z" fill="#fff" stroke="none" />
      </svg>
      <svg viewBox="0 0 16 12" className="ml-2 h-3 w-4" stroke="#fff" strokeWidth="2">
        <path d="M2 12V9M5 12V8M8 12V6M11 12V3M14 12V0" />
      </svg>
      <svg viewBox="0 0 14 14" className="ml-[9px] size-3.5" fill="none" stroke="#fff">
        <path d="M1 4.500h2.500L7 1v12L3.500 9.500H1z" fill="#fff" />
        <path d="M9.500 4.500c1.500 1.500 1.500 3.500 0 5M11.500 2.500c2 2.500 2 6 0 9" />
      </svg>
      <time className="ml-4 w-[60px] text-center leading-[18px]">13:32<br />2023/4/6</time>
      <button aria-label="显示桌面" className="ml-2 h-full w-[15px] border border-[#3f4d61] bg-linear-to-b from-[#93a1b5] via-[#5b6b82] to-[#8595ab]" />
    </div>
  </div>
);

export default function App() {
  return (
    <div lang="zh-CN" className="flex h-screen flex-col overflow-hidden bg-[#bfdbff] font-['Noto_Sans','Noto_Sans_CJK_SC',sans-serif] text-[12px]">
      <TitleBar />
      <TabRow />
      <div className="flex shrink-0 bg-[#9dbce6] pb-px">
        <div className="mx-px flex min-w-0 flex-1 gap-[3px] rounded-[4px] border border-[#8db2e3] bg-linear-to-b from-[#dcebf8] to-[#d3eaf9] pb-0.5 pl-[3px] pr-[8px] pt-[3px]">
          <ClipboardGroup />
          <FontGroup />
          <ParagraphGroup />
          <StylesGroup />
          <EditGroup />
        </div>
      </div>
      <main className="relative flex min-h-0 flex-1 bg-[linear-gradient(#9fc0ea,#94b6e3_12%,#7096c8_41%,#4f7bb0_66%,#5a87c2_80%,#6292d0)]">
        <Sweep />
        <div className="flex min-w-0 flex-1 items-start justify-center overflow-hidden pl-0.5">
          <Paper />
        </div>
        <ScrollBar />
      </main>
      <StatusBar />
      <TaskBar />
    </div>
  );
}
